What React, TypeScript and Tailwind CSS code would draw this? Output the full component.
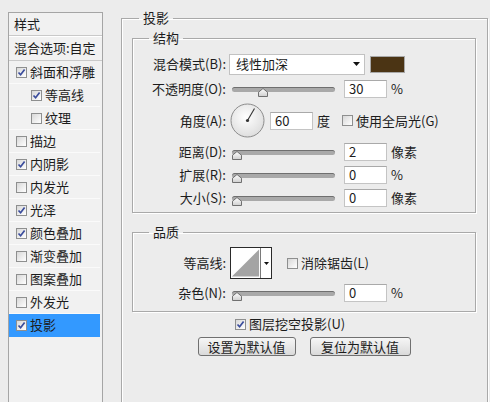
import React from "react";

type Layer = { label: string; checked: boolean; sub?: boolean; active?: boolean };

const layers: Layer[] = [
  { label: "斜面和浮雕", checked: true },
  { label: "等高线", checked: true, sub: true },
  { label: "纹理", checked: false, sub: true },
  { label: "描边", checked: false },
  { label: "内阴影", checked: true },
  { label: "内发光", checked: false },
  { label: "光泽", checked: true },
  { label: "颜色叠加", checked: true },
  { label: "渐变叠加", checked: false },
  { label: "图案叠加", checked: false },
  { label: "外发光", checked: false },
  { label: "投影", checked: true, active: true },
];

function Check({ checked }: { checked: boolean }) {
  return (
    <span className="flex h-[11px] w-[11px] shrink-0 items-center justify-center border border-[#8e8f8f] bg-gradient-to-br from-[#d8d8d8] to-white">
      {checked && (
        <svg width="9" height="9" viewBox="0 0 9 9">
          <path d="M1.5 4.5 L3.6 6.8 L7.6 1.6" fill="none" stroke="#3a4c9c" strokeWidth="1.7" />
        </svg>
      )}
    </span>
  );
}

function Slider({ at }: { at: number }) {
  return (
    <div className="relative ml-[6px] flex h-full w-[103px] items-center">
      <div className="h-[5px] w-full rounded-full border-t border-[#6f6f6f] bg-[#a9a9a9]" />
      <svg
        className="absolute top-[calc(50%-1px)]"
        style={{ left: at - 5 }}
        width="10"
        height="9"
        viewBox="0 0 10 9"
      >
        <defs>
          <linearGradient id="thumb" x1="0" y1="0" x2="0" y2="1">
            <stop offset="0" stopColor="#ffffff" />
            <stop offset="1" stopColor="#cfcfcf" />
          </linearGradient>
        </defs>
        <polygon points="0.5,8.5 0.5,4.2 5,0.5 9.5,4.2 9.5,8.5" fill="url(#thumb)" stroke="#707070" />
      </svg>
    </div>
  );
}

function NumBox({ value, className = "" }: { value: string; className?: string }) {
  return (
    <div
      className={`flex h-[18px] w-[43px] items-center border border-[#c4c4c4] border-t-[#a9a9a9] bg-white pl-[4px] text-[13px] ${className}`}
    >
      {value}
    </div>
  );
}

function Label({ children }: { children: React.ReactNode }) {
  return <span className="w-[93px] shrink-0 text-right">{children}</span>;
}

function SliderRow({ label, at, value, unit, className = "" }: { label: string; at: number; value: string; unit: string; className?: string }) {
  return (
    <div className={`flex h-[22px] items-center ${className}`}>
      <Label>{label}</Label>
      <Slider at={at} />
      <NumBox value={value} className="ml-[9px]" />
      <span className="ml-[4px]">{unit}</span>
    </div>
  );
}

const groupBox =
  "border border-[#a9a9a9] shadow-[inset_1px_1px_0_#ffffff,1px_1px_0_#ffffff]";

export default function App() {
  return (
    <div className="flex h-[402px] w-[490px] overflow-hidden bg-[#ececec] font-['Noto_Sans_CJK_SC',sans-serif] text-[13px] leading-[16px] text-[#1c1c1c]">
      {/* style list */}
      <div className="ml-[8px] mt-[12px] h-[400px] w-[95px] shrink-0 border border-[#a5a5a5] bg-[#f1f1f1]">
        <div className="flex h-[23px] items-center border-b border-[#c9c9c9] pl-[5px]">样式</div>
        <div className="flex h-[25px] items-center border-b border-[#c9c9c9] pl-[5px] shadow-[inset_0_1px_0_#ffffff]">
          混合选项:自定
        </div>
        {layers.map((l) => (
          <div
            key={l.label}
            className={`mr-[2px] flex h-[23px] items-center border-b ${
              l.active ? "border-[#3399ff] bg-[#3399ff]" : "border-[#fafafa]"
            } ${l.sub ? "pl-[22px]" : "pl-[7px]"}`}
          >
            <Check checked={l.checked} />
            <span className="ml-[3px]">{l.label}</span>
          </div>
        ))}
      </div>

      {/* drop shadow settings */}
      <fieldset className={`ml-[18px] mt-[10px] h-[400px] w-[367px] shrink-0 pl-[10px] pr-[11px] ${groupBox}`}>
        <legend className="ml-[7px] px-[4px]">投影</legend>

        <fieldset className={`mt-[4px] pb-[3px] ${groupBox}`}>
          <legend className="ml-[16px] px-[4px]">结构</legend>
          <div className="mt-[7px] flex h-[22px] items-center">
            <Label>混合模式(B):</Label>
            <div className="ml-[3px] flex h-[21px] w-[136px] items-center justify-between border border-[#c2c2c2] bg-white pl-[6px] pr-[4px]">
              <span>线性加深</span>
              <svg width="7" height="4" viewBox="0 0 7 4">
                <polygon points="0,0 7,0 3.5,4" fill="#111" />
              </svg>
            </div>
            <div className="ml-[5px] h-[17px] w-[35px] border border-[#a8a8a8] bg-[#4b3414]" />
          </div>

          <SliderRow label="不透明度(O):" at={31} value="30" unit="%" className="mt-[3px]" />

          <div className="mt-[2px] flex h-[37px] items-center">
            <Label>角度(A):</Label>
            <svg className="ml-[4px]" width="35" height="35" viewBox="0 0 35 35">
              <defs>
                <radialGradient id="dial" cx="0.45" cy="0.4" r="0.6">
                  <stop offset="0" stopColor="#ffffff" />
                  <stop offset="1" stopColor="#dedede" />
                </radialGradient>
              </defs>
              <circle cx="17.5" cy="17.5" r="16.5" fill="url(#dial)" stroke="#8c8c8c" />
              <line x1="17.5" y1="17.5" x2="24.5" y2="5.5" stroke="#333" strokeWidth="1.1" />
              <circle cx="17.5" cy="17.5" r="1.6" fill="#333" />
            </svg>
            <NumBox value="60" className="ml-[5px] w-[42px]" />
            <span className="ml-[4px]">度</span>
            <span className="ml-[12px]">
              <Check checked={false} />
            </span>
            <span className="ml-[3px]">使用全局光(G)</span>
          </div>

          <SliderRow label="距离(D):" at={5} value="2" unit="像素" className="mt-[2px]" />
          <SliderRow label="扩展(R):" at={5} value="0" unit="%" className="mt-px" />
          <SliderRow label="大小(S):" at={5} value="0" unit="像素" className="mt-px" />
        </fieldset>

        <fieldset className={`mt-[11px] pb-[7px] ${groupBox}`}>
          <legend className="ml-[16px] px-[4px]">品质</legend>
          <div className="mt-[7px] flex h-[32px] items-center">
            <Label>等高线:</Label>
            <div className="ml-[4px] flex h-[32px] w-[42px] border border-[#2a2a2a] bg-white">
              <svg width="30" height="30" viewBox="0 0 30 30" className="border-r border-[#7a7a7a]">
                <polygon points="1,29 29,1 29,29" fill="#a4a4a4" />
              </svg>
              <div className="flex flex-1 items-center justify-center">
                <svg width="5" height="3" viewBox="0 0 5 3">
                  <polygon points="0,0 5,0 2.5,3" fill="#111" />
                </svg>
              </div>
            </div>
            <span className="ml-[15px]">
              <Check checked={false} />
            </span>
            <span className="ml-[3px]">消除锯齿(L)</span>
          </div>
          <SliderRow label="杂色(N):" at={5} value="0" unit="%" className="mt-[3px]" />
        </fieldset>

        <div className="mt-[4px] flex h-[16px] items-center pl-[103px]">
          <Check checked />
          <span className="ml-[3px]">图层挖空投影(U)</span>
        </div>

        <div className="mt-[5px] flex justify-center gap-[14px]">
          <button className="flex h-[19px] w-[98px] items-center justify-center rounded-[3px] border border-[#707070] bg-gradient-to-b from-[#f6f6f6] to-[#dadada]">
            设置为默认值
          </button>
          <button className="flex h-[19px] w-[101px] items-center justify-center rounded-[3px] border border-[#707070] bg-gradient-to-b from-[#f6f6f6] to-[#dadada]">
            复位为默认值
          </button>
        </div>
      </fieldset>
    </div>
  );
}
